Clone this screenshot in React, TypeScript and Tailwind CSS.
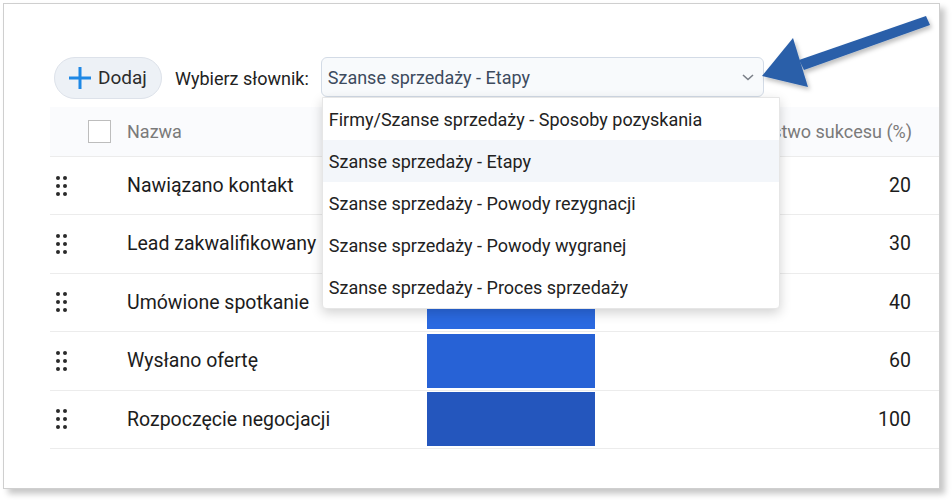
import React from "react";

const rows = [
  { name: "Nawiązano kontakt", value: 20, color: "#2f73ea" },
  { name: "Lead zakwalifikowany", value: 30, color: "#2c6ee6" },
  { name: "Umówione spotkanie", value: 40, color: "#2a69e0" },
  { name: "Wysłano ofertę", value: 60, color: "#2762d6" },
  { name: "Rozpoczęcie negocjacji", value: 100, color: "#2456bd" },
];

const options = [
  "Firmy/Szanse sprzedaży - Sposoby pozyskania",
  "Szanse sprzedaży - Etapy",
  "Szanse sprzedaży - Powody rezygnacji",
  "Szanse sprzedaży - Powody wygranej",
  "Szanse sprzedaży - Proces sprzedaży",
];

function DragHandle() {
  return (
    <div className="grid grid-cols-2 gap-x-[3px] gap-y-[4px] w-[11px]">
      {[0, 1, 2, 3, 4, 5].map((i) => (
        <span key={i} className="block w-[4px] h-[4px] rounded-full bg-[#2a2a2a]" />
      ))}
    </div>
  );
}

export default function App() {
  return (
    <div
      className="relative w-[952px] h-[500px] bg-white overflow-hidden"
      style={{ fontFamily: "Roboto, 'Noto Sans', sans-serif" }}
    >
      <div className="ml-[3px] mt-[3px] w-[937px] h-[486px] border border-[#cfcfcf] bg-white shadow-[5px_5px_6px_rgba(0,0,0,0.22)] pl-[46px] pt-[53px]">
        {/* Toolbar */}
        <div className="flex items-center ml-[4px] h-[42px]">
          <button className="flex items-center h-[42px] w-[108px] rounded-full border border-[#dde2ea] bg-[#edf1f6] pl-[12px] text-[19px] text-[#2b2b2b]">
            <svg width="26" height="26" viewBox="0 0 26 26" className="mr-[5px]">
              <path d="M13 2v22M2 13h22" stroke="#1e88e5" strokeWidth="3" strokeLinecap="butt" />
            </svg>
            Dodaj
          </button>
          <span className="ml-[13px] text-[18px] text-[#222]">Wybierz słownik:</span>
          <div className="relative ml-[12px] w-[443px] h-[40px] self-start">
            <div className="flex items-center justify-between h-[40px] rounded-[6px] border border-[#d3dbe6] bg-[#f8fafc] pl-[6px] pr-[8px] text-[18px] text-[#3d4b5e]">
              <span>Szanse sprzedaży - Etapy</span>
              <svg width="14" height="10" viewBox="0 0 14 10">
                <path d="M2 3l5 4.5L12 3" fill="none" stroke="#7a7f87" strokeWidth="1.6" />
              </svg>
            </div>
            <div className="absolute z-20 top-[40px] left-[1px] w-[458px] bg-white rounded-b-[4px] shadow-[0_4px_12px_rgba(0,0,0,0.18)] border border-[#e6e6e6]">
              {options.map((o, i) => (
                <div
                  key={o}
                  className={`h-[42px] flex items-center pl-[6px] text-[18px] text-[#222] ${i === 1 ? "bg-[#f3f6fa]" : ""}`}
                >
                  {o}
                </div>
              ))}
            </div>
          </div>
        </div>

        {/* Table */}
        <div className="mt-[8px]">
          <div className="grid grid-cols-[77px_300px_168px_1fr] h-[50px] items-center bg-[#fafbfd] border-b border-[#ececec] text-[18px] text-[#7a7a7a]">
            <div className="pl-[38px]">
              <span className="block w-[23px] h-[23px] border border-[#bdbdbd] bg-white" />
            </div>
            <div>Nazwa</div>
            <div />
            <div className="text-right pr-[27px] whitespace-nowrap">Prawdopodobieństwo sukcesu (%)</div>
          </div>
          {rows.map((r) => (
            <div
              key={r.name}
              className="grid grid-cols-[77px_300px_168px_1fr] h-[58.4px] items-center border-b border-[#ececec] text-[19.5px] text-[#1c1c1c]"
            >
              <div className="pl-[6px]">
                <DragHandle />
              </div>
              <div className="whitespace-nowrap">{r.name}</div>
              <div className="h-[54px]" style={{ backgroundColor: r.color }} />
              <div className="text-right pr-[28px]">{r.value}</div>
            </div>
          ))}
        </div>
      </div>

      {/* Arrow annotation */}
      <svg
        className="absolute left-0 top-0 pointer-events-none z-30"
        width="952"
        height="500"
        viewBox="0 0 952 500"
      >
        <defs>
          <filter id="ash" x="-20%" y="-20%" width="140%" height="140%">
            <feDropShadow dx="2" dy="3" stdDeviation="2" floodColor="#000" floodOpacity="0.25" />
          </filter>
        </defs>
        <g filter="url(#ash)" fill="#2a5fa9">
          <polygon points="926,16 930,25 804,70 799,60" />
          <polygon points="762,76 793,38 808,87" />
        </g>
      </svg>
    </div>
  );
}
